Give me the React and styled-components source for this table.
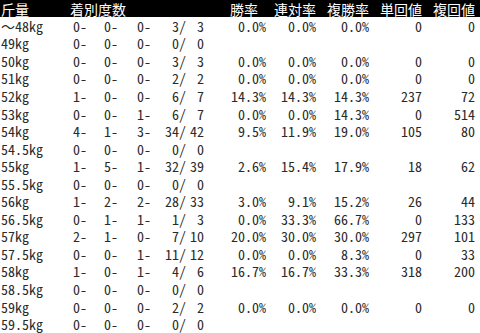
import styled, { createGlobalStyle } from 'styled-components'

const GlobalStyle = createGlobalStyle`
    html, body{
        margin: 0;
        padding: 0;
        background: #ffffff;
    }
`;

const COLS = '70px 17px 31px 33px 35px 18px 62px 50px 53px 53px 53px 5px';

const headers = [
    { label: '斤量', span: 1, align: 'left', pad: '0 0 0 1px' },
    { label: '着別度数', span: 5, align: 'left', pad: '0' },
    { label: '勝率', span: 1, align: 'right', pad: '0 8px 0 0' },
    { label: '連対率', span: 1, align: 'right', pad: '0' },
    { label: '複勝率', span: 1, align: 'right', pad: '0' },
    { label: '単回値', span: 1, align: 'right', pad: '0' },
    { label: '複回値', span: 1, align: 'right', pad: '0' },
];

const rows = [
    ['～48kg', '0-', '0-', '0-', '3/', '3', '0.0%', '0.0%', '0.0%', '0', '0'],
    ['49kg', '0-', '0-', '0-', '0/', '0'],
    ['50kg', '0-', '0-', '0-', '3/', '3', '0.0%', '0.0%', '0.0%', '0', '0'],
    ['51kg', '0-', '0-', '0-', '2/', '2', '0.0%', '0.0%', '0.0%', '0', '0'],
    ['52kg', '1-', '0-', '0-', '6/', '7', '14.3%', '14.3%', '14.3%', '237', '72'],
    ['53kg', '0-', '0-', '1-', '6/', '7', '0.0%', '0.0%', '14.3%', '0', '514'],
    ['54kg', '4-', '1-', '3-', '34/', '42', '9.5%', '11.9%', '19.0%', '105', '80'],
    ['54.5kg', '0-', '0-', '0-', '0/', '0'],
    ['55kg', '1-', '5-', '1-', '32/', '39', '2.6%', '15.4%', '17.9%', '18', '62'],
    ['55.5kg', '0-', '0-', '0-', '0/', '0'],
    ['56kg', '1-', '2-', '2-', '28/', '33', '3.0%', '9.1%', '15.2%', '26', '44'],
    ['56.5kg', '0-', '1-', '1-', '1/', '3', '0.0%', '33.3%', '66.7%', '0', '133'],
    ['57kg', '2-', '1-', '0-', '7/', '10', '20.0%', '30.0%', '30.0%', '297', '101'],
    ['57.5kg', '0-', '0-', '1-', '11/', '12', '0.0%', '0.0%', '8.3%', '0', '33'],
    ['58kg', '1-', '0-', '1-', '4/', '6', '16.7%', '16.7%', '33.3%', '318', '200'],
    ['58.5kg', '0-', '0-', '0-', '0/', '0'],
    ['59kg', '0-', '0-', '0-', '2/', '2', '0.0%', '0.0%', '0.0%', '0', '0'],
    ['59.5kg', '0-', '0-', '0-', '0/', '0'],
];

export default function App(){
    return(
        <>
            <GlobalStyle/>
            <Table>
                <HeadRow>
                    {headers.map(h => (
                        <HeadCell key={h.label} span={h.span} align={h.align} pad={h.pad}>{h.label}</HeadCell>
                    ))}
                </HeadRow>
                {rows.map(r => (
                    <Row key={r[0]}>
                        {r.map((v, i) => (
                            <Cell key={i} align={i === 0 ? 'left' : 'right'}>{v}</Cell>
                        ))}
                    </Row>
                ))}
            </Table>
        </>
    )
}

const Table = styled.div`
    width: 480px;
    height: 333px;
    overflow: hidden;
    font-family: "Noto Sans Mono CJK JP", "Noto Sans CJK JP", "DejaVu Sans Mono", monospace;
    font-size: 14px;
    color: #2a2a2a;
    display: flex;
    flex-direction: column;
`;

const HeadRow = styled.div`
    display: grid;
    grid-template-columns: ${COLS};
    height: 17px;
    flex-shrink: 0;
    background: #000000;
    color: #ffffff;
    align-items: center;
`;

const HeadCell = styled.div`
    grid-column: span ${props => props.span};
    text-align: ${props => props.align};
    padding: ${props => props.pad};
    line-height: 16px;
    white-space: nowrap;
`;

const Row = styled.div`
    display: grid;
    grid-template-columns: ${COLS};
    height: 17.55px;
    flex-shrink: 0;
    align-items: center;
`;

const Cell = styled.div`
    text-align: ${props => props.align};
    padding-left: ${props => props.align === 'left' ? '1px' : '0'};
    line-height: 16px;
    white-space: nowrap;
`;
